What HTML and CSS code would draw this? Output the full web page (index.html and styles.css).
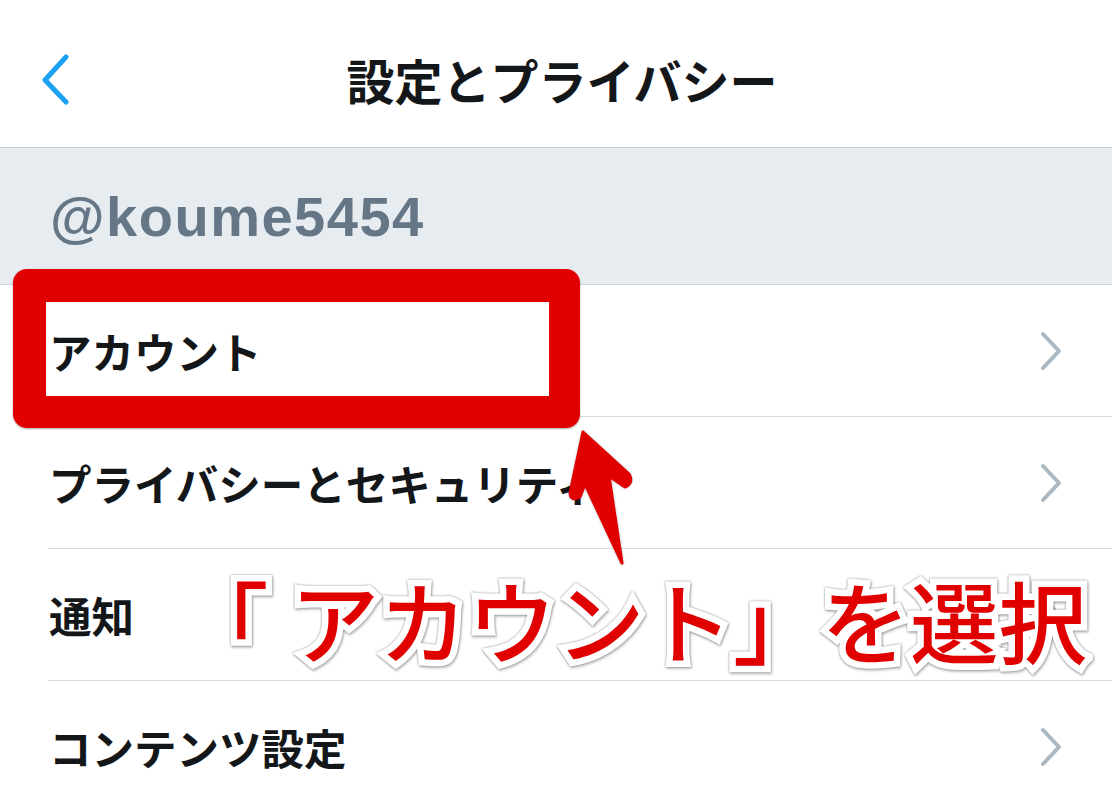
FILE: index.html
```html
<!DOCTYPE html>
<html lang="ja">
<head>
  <meta charset="UTF-8" />
  <meta name="viewport" content="width=device-width, initial-scale=1.0"/>
  <title>設定とプライバシー</title>
  <link rel="stylesheet" href="styles.css">
</head>
<body>
  <div class="screen">
    <header class="nav">
      <a class="back" href="#">
        <svg width="32" height="52" viewBox="0 0 32 52">
          <polyline points="24,4 3,27 24,49" fill="none" stroke="#1da1f2" stroke-width="5" stroke-linecap="round" stroke-linejoin="round"/>
        </svg>
      </a>
      <h1>設定とプライバシー</h1>
      <div></div>
    </header>

    <div class="account">@koume5454</div>

    <ul class="menu">
      <li class="row">
        <span>アカウント</span>
        <svg class="chev" width="24" height="40" viewBox="0 0 24 40"><polyline points="4,3 20,20 4,37" fill="none" stroke="#aab8c2" stroke-width="4" stroke-linecap="round" stroke-linejoin="round"/></svg>
      </li>
      <li class="row">
        <span>プライバシーとセキュリティ</span>
        <svg class="chev" width="24" height="40" viewBox="0 0 24 40"><polyline points="4,3 20,20 4,37" fill="none" stroke="#aab8c2" stroke-width="4" stroke-linecap="round" stroke-linejoin="round"/></svg>
      </li>
      <li class="row">
        <span>通知</span>
        <svg class="chev" width="24" height="40" viewBox="0 0 24 40"><polyline points="4,3 20,20 4,37" fill="none" stroke="#aab8c2" stroke-width="4" stroke-linecap="round" stroke-linejoin="round"/></svg>
      </li>
      <li class="row">
        <span>コンテンツ設定</span>
        <svg class="chev" width="24" height="40" viewBox="0 0 24 40"><polyline points="4,3 20,20 4,37" fill="none" stroke="#aab8c2" stroke-width="4" stroke-linecap="round" stroke-linejoin="round"/></svg>
      </li>
    </ul>

    <!-- annotation overlay -->
    <div class="mark"></div>
    <svg class="arrow" width="1112" height="798" viewBox="0 0 1112 798">
      <path d="M583,432 L629,474 Q634,483 625,487 L609,476 L622,563 L585,484 L580,497 Q571,502 570,493 Z" fill="#e00000" stroke="#e00000" stroke-width="3" stroke-linejoin="round"/>
    </svg>
    <div class="caption"><span class="open">「</span>アカウント」を選択</div>
  </div>
</body>
</html>
```

FILE: styles.css
```css
body {
  margin: 0;
  padding: 0;
  background-color: #fff;
  font-family: "Liberation Sans", "Noto Sans CJK JP", sans-serif;
  color: #14171a;
}

.screen {
  position: relative;
  width: 1112px;
  height: 798px;
  overflow: hidden;
}

.nav {
  display: grid;
  grid-template-columns: 1fr auto 1fr;
  align-items: center;
  height: 137px;
  padding-top: 10px;
  border-bottom: 1px solid #c4ced4;
}

.back {
  display: flex;
  padding-left: 42px;
}

.nav h1 {
  margin: 0 0 0 12px;
  font-family: "Noto Sans CJK JP", sans-serif;
  font-size: 48px;
  font-weight: 700;
  color: #14171a;
  line-height: 1;
}

.account {
  display: flex;
  align-items: center;
  height: 136px;
  padding-left: 50px;
  background-color: #e6ecf0;
  border-bottom: 1px solid #ccd6dd;
  font-size: 56px;
  font-weight: 700;
  letter-spacing: 1.5px;
  color: #657786;
}

.menu {
  list-style: none;
  margin: 0;
  padding: 0;
}

.row {
  display: flex;
  align-items: center;
  justify-content: space-between;
  height: 131px;
  margin-left: 48px;
  padding: 0 49px 0 1px;
  border-bottom: 1px solid #d5dde2;
  font-family: "Noto Sans CJK JP", sans-serif;
  font-size: 42.5px;
  font-weight: 700;
}

.chev {
  display: block;
}

.mark {
  position: absolute;
  left: 13px;
  top: 269px;
  width: 503px;
  height: 94px;
  border: solid #e00000;
  border-width: 33px 31px 32px 33px;
  border-radius: 14px;
  box-shadow: 0 1px 2px rgba(0, 0, 0, 0.35);
}

.arrow {
  position: absolute;
  left: 0;
  top: 0;
  filter: drop-shadow(0 0 1px rgba(0, 0, 0, 0.3));
}

.caption {
  position: absolute;
  left: 202px;
  top: 574px;
  font-family: "Noto Sans CJK JP", sans-serif;
  font-size: 88.5px;
  font-weight: 500;
  line-height: 1;
  white-space: nowrap;
  color: #e00000;
  -webkit-text-stroke: 13px #fff;
  paint-order: stroke fill;
  filter: drop-shadow(0 0 1px rgba(0, 0, 0, 0.45)) drop-shadow(1px 2px 1px rgba(0, 0, 0, 0.2));
}

.caption .open {
  position: relative;
  left: -22px;
}
```
